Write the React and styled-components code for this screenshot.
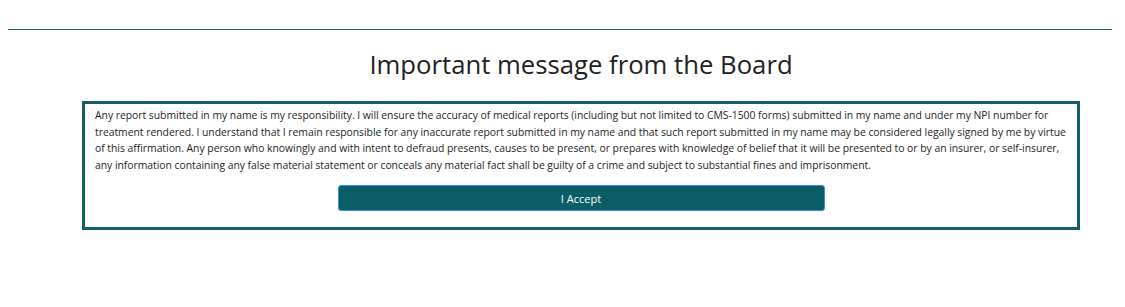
import React from 'react';
import styled, { createGlobalStyle } from 'styled-components';

const GlobalStyle = createGlobalStyle`
  body {
    margin: 0;
    background: #ffffff;
    font-family: "Open Sans", "Liberation Sans", sans-serif;
    color: #222222;
  }
`;

const Page = styled.div`
  padding: 29px 13px 0 8px;
`;

const Divider = styled.hr`
  margin: 0;
  border: 0;
  border-top: 1px solid #1a5c64;
`;

const Main = styled.main`
  display: flex;
  flex-direction: column;
  align-items: center;
  padding-left: 42px;
`;

const Title = styled.h1`
  margin: 16px 0 0;
  height: 55px;
  font-size: 25.7px;
  font-weight: 400;
  line-height: 38px;
  color: #222222;
`;

const Notice = styled.section`
  box-sizing: border-box;
  width: 998px;
  border: 3px solid #165d66;
  padding: 3px 10px 16px 10px;
  display: flex;
  flex-direction: column;
  align-items: center;
`;

const Text = styled.p`
  margin: 0;
  align-self: stretch;
  font-size: 10.4px;
  letter-spacing: -0.03px;
  line-height: 16.5px;
  color: #1e1e1e;
  white-space: nowrap;
`;

const AcceptButton = styled.button`
  margin-top: 12px;
  width: 487px;
  height: 26px;
  border: 1px solid #3f8ee0;
  border-radius: 3px;
  background: #0b5e66;
  color: #ffffff;
  font-family: inherit;
  font-size: 11px;
  cursor: pointer;
`;

const lines = [
  'Any report submitted in my name is my responsibility. I will ensure the accuracy of medical reports (including but not limited to CMS-1500 forms) submitted in my name and under my NPI number for',
  'treatment rendered. I understand that I remain responsible for any inaccurate report submitted in my name and that such report submitted in my name may be considered legally signed by me by virtue',
  'of this affirmation. Any person who knowingly and with intent to defraud presents, causes to be present, or prepares with knowledge of belief that it will be presented to or by an insurer, or self-insurer,',
  'any information containing any false material statement or conceals any material fact shall be guilty of a crime and subject to substantial fines and imprisonment.',
];

export default function App() {
  return (
    <Page>
      <GlobalStyle />
      <Divider />
      <Main>
        <Title>Important message from the Board</Title>
        <Notice>
          <Text>
            {lines.map((line, i) => (
              <React.Fragment key={i}>
                {line}
                {i < lines.length - 1 && <br />}
              </React.Fragment>
            ))}
          </Text>
          <AcceptButton type="button">I Accept</AcceptButton>
        </Notice>
      </Main>
    </Page>
  );
}
